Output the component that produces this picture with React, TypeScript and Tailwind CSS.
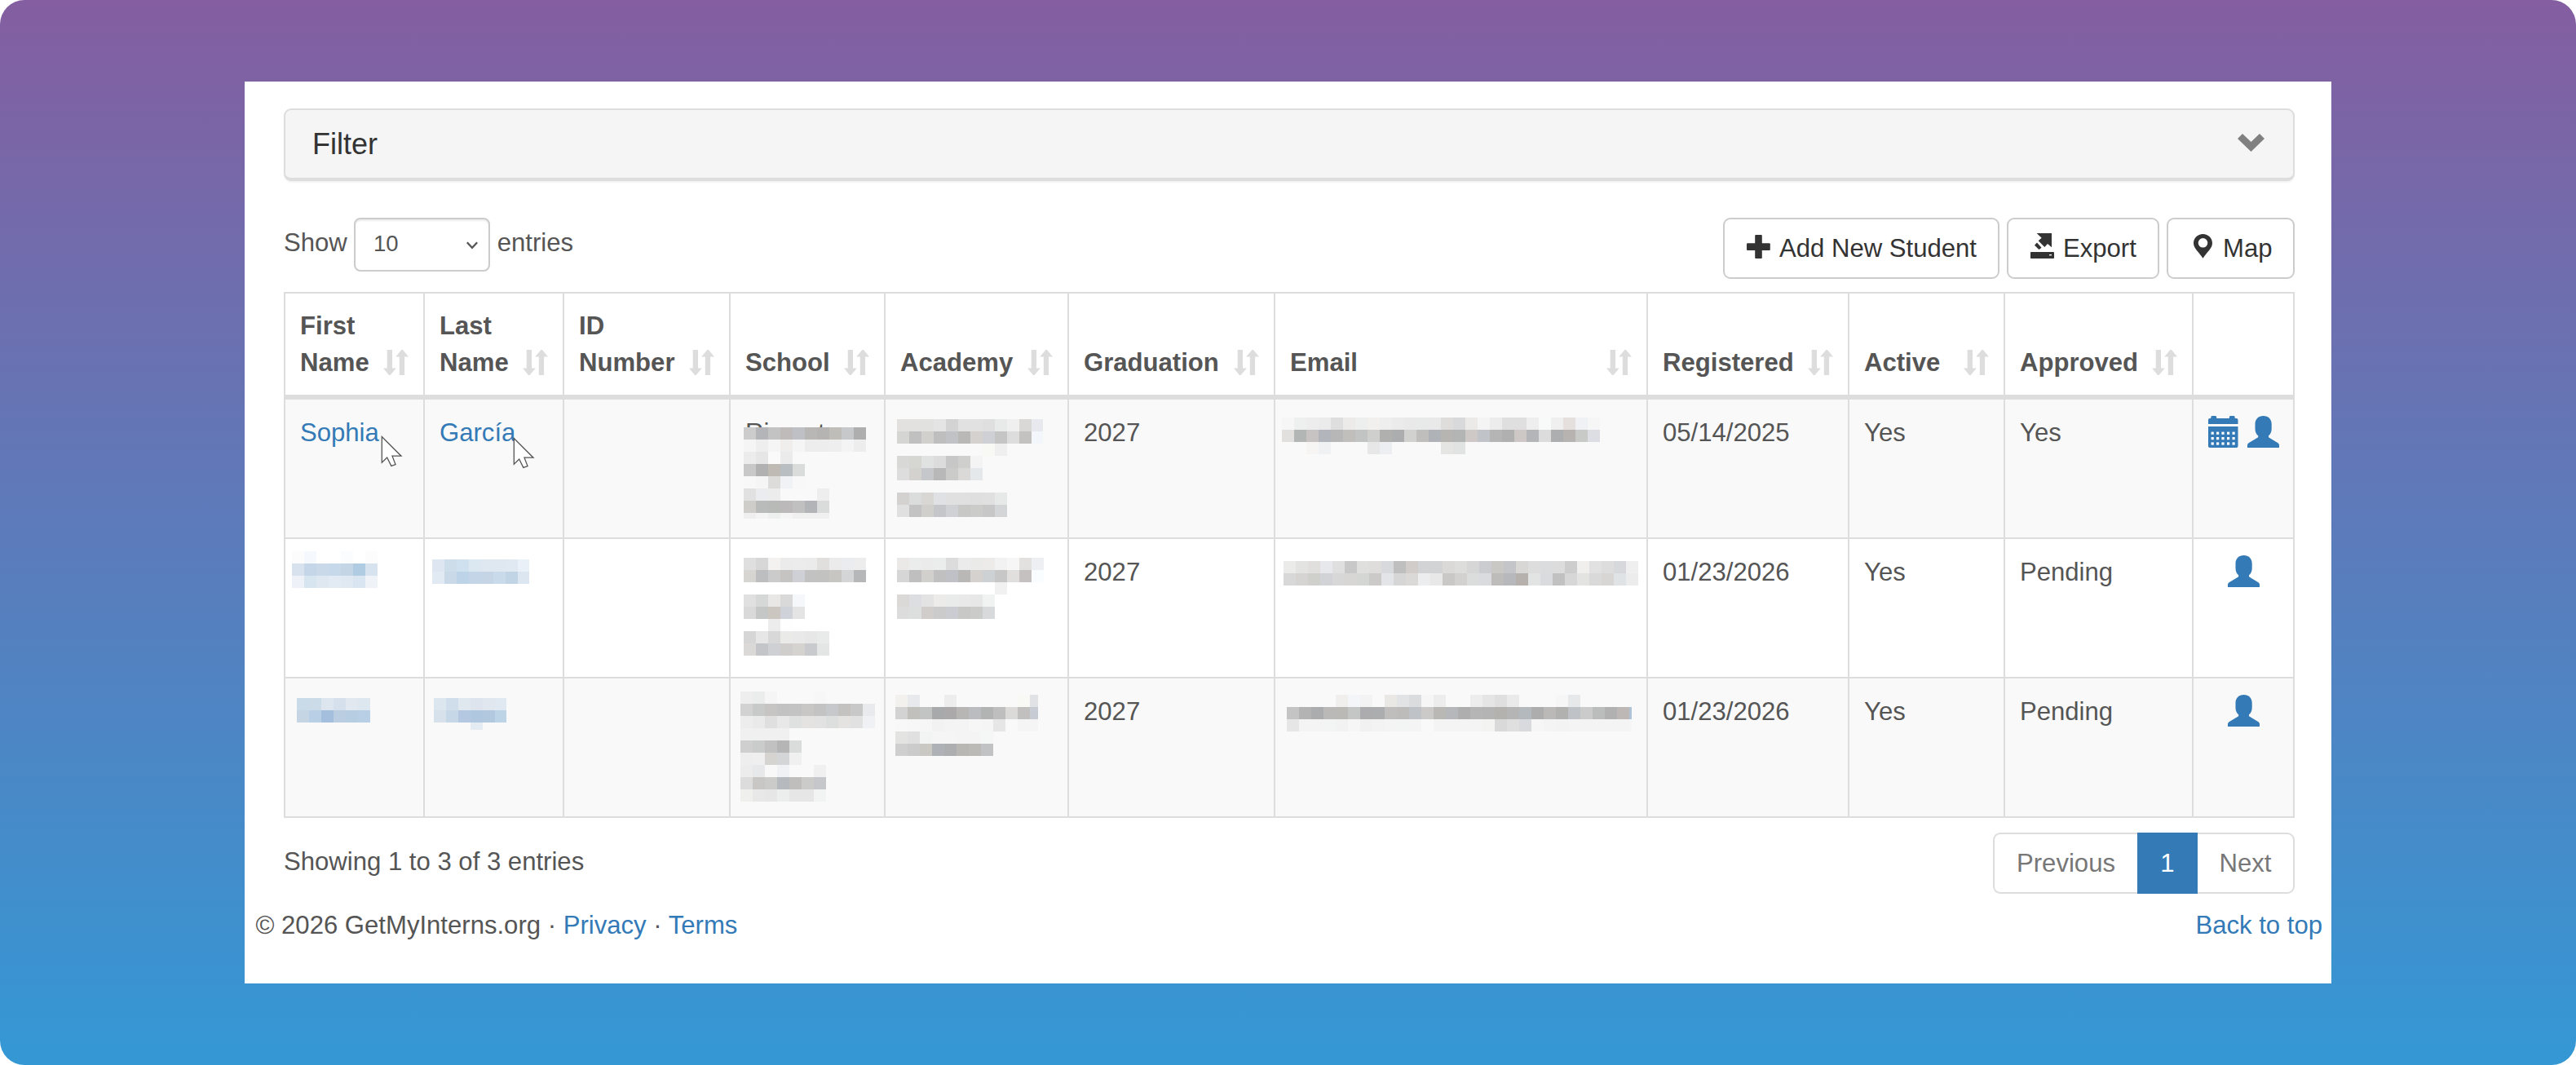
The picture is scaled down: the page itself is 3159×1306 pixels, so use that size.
import { ReactNode } from "react";

type Mosaic = {
  x: number;
  y: number;
  rows: string[];
  width?: number;
  height?: number;
};

type Student = {
  first: ReactNode;
  last: ReactNode;
  school: ReactNode;
  academy: ReactNode;
  graduation: string;
  email: ReactNode;
  registered: string;
  active: string;
  approved: string;
  hasCalendar?: boolean;
};

const BLOCK = 15;

// Each token is one block: "." is empty, "cc" is a grey, "c3d5e6" a full colour
function Redacted({ x, y, rows, width, height }: Mosaic) {
  const lines = rows.map((row) => row.split(" "));
  const w = width ?? Math.max(...lines.map((line) => line.length)) * BLOCK;
  const h = height ?? lines.length * BLOCK;

  return (
    <svg
      className="absolute block"
      style={{ left: x, top: y }}
      width={w}
      height={h}
      shapeRendering="crispEdges"
    >
      {lines.map((line, r) =>
        line.map((token, c) => {
          if (token === "." || token === "") return null;
          const fill = token.length === 2 ? `#${token}${token}${token}` : `#${token}`;
          return (
            <rect key={`${r}-${c}`} x={c * BLOCK} y={r * BLOCK} width={BLOCK} height={BLOCK} fill={fill} />
          );
        })
      )}
    </svg>
  );
}

function CursorIcon({ className }: { className: string }) {
  return (
    <svg className={className} width="28" height="40" viewBox="-1 -1 28 40">
      <path
        d="M.3 .5V32.3L6.7 26L11.8 36.4L17 34.6L13 24.2H24Z"
        fill="#fff"
        stroke="#555"
        strokeWidth="1.3"
      />
    </svg>
  );
}

function SortIcon() {
  return (
    <svg className="absolute right-[18px] bottom-6" width="31" height="31" viewBox="0 0 31 31" fill="#ddd">
      <path d="M4.7 0h6.3v22.5h4.8L8.6 31H7L0 22.5h4.7z" />
      <path d="M19.8 31h6.3V8.5H31L24 0h-1.6L15.2 8.5h4.6z" />
    </svg>
  );
}

function PlusIcon() {
  return (
    <svg className="mr-[9px] -mt-1 shrink-0" width="31" height="29" viewBox="0 0 31 29" fill="#333">
      <rect x="10.2" y="0" width="8.6" height="29" rx="1" />
      <rect x="0" y="10.3" width="28.8" height="8.8" rx="1" />
    </svg>
  );
}

function ExportIcon() {
  return (
    <svg className="mr-[9px] -mt-[6px] shrink-0" width="31" height="31" viewBox="30 33 93 93" fill="#333">
      <path d="M53 33H108V85L93 72L82 84L59 61L71 50Z" />
      <path d="M55 66L72 84L66 90L61 93L45 77Z" />
      <path d="M50 60L75 87" stroke="#fff" strokeWidth="5" />
      <path d="M32 102H115Q117 102 117 104V124Q117 126 115 126H32Q30 126 30 124V104Q30 102 32 102Z" />
      <rect x="99" y="111" width="9" height="4" fill="#fff" />
    </svg>
  );
}

function PinIcon() {
  return (
    <svg className="ml-[4px] mr-[13px] -mt-[6px] shrink-0" width="23" height="30" viewBox="0 0 23 30" fill="#333">
      <path
        fillRule="evenodd"
        d="M11.5 0C5 0 0 5 0 11.2c0 6.500 6.500 10.500 11.500 18.600c5-8.100 11.500-12.100 11.500-18.600C23 5 18 0 11.5 0zM11.500 5a5.800 5.800 0 1 1 0 11.600a5.800 5.800 0 0 1 0-11.600z"
      />
    </svg>
  );
}

function UserIcon() {
  return (
    <svg width="39" height="39" viewBox="0 0 39 39" fill="#337ab7">
      <path d="M19.600 0C13.500 0 9.500 4 9.500 10v6c0 4 1.700 6.800 3.700 8.200v2.100L1.500 33.200Q0 34.200 0 35.800V39H39V35.800Q39 34.200 37.500 33.200L26 26.300V24.200c2-1.400 3.700-4.200 3.700-8.200v-6C29.700 4 25.700 0 19.600 0z" />
    </svg>
  );
}

function CalendarIcon() {
  return (
    <svg width="37" height="39" viewBox="0 0 37 39" fill="#337ab7">
      <path d="M0 10V5Q0 3 2 3H3.300V1.500Q3.300 0 4.800 0H8.700Q10.200 0 10.200 1.500V3H25.800V1.500Q25.800 0 27.300 0H31.200Q32.700 0 32.700 1.500V3H34.500Q36.500 3 36.500 5V10z" />
      <path d="M0 13H36.500V37Q36.500 39 34.500 39H2Q0 39 0 37z" />
      {[19.6, 26, 32.4].map((cy) =>
        [3.6, 10, 16.4, 23, 29.5].map((cx) => (
          <rect key={`${cx}-${cy}`} x={cx} y={cy} width="3.200" height="3.200" fill="#fff" />
        ))
      )}
    </svg>
  );
}

const columns = [
  "First Name",
  "Last Name",
  "ID Number",
  "School",
  "Academy",
  "Graduation",
  "Email",
  "Registered",
  "Active",
  "Approved",
  "",
];

const gridCols = "grid grid-cols-[171px_171px_204px_190px_225px_253px_457px_247px_191px_231px_124px]";

const students: Student[] = [
  {
    first: (
      <>
        <a className="text-[#337ab7]">Sophia</a>
        <CursorIcon className="absolute left-[117px] top-11 z-10" />
      </>
    ),
    last: (
      <>
        <a className="text-[#337ab7]">García</a>
        <CursorIcon className="absolute left-[108px] top-[46px] z-10" />
      </>
    ),
    school: (
      <>
        <span className="inline-block w-[89px]">Ri</span>
        <span>t</span>
        <Redacted
          x={16}
          y={34}
          height={112}
          rows={[
            "cc b4b5b8 c3 bfbbba bfc0c6 b8b7b6 b6b4b2 bfbdb8 c7c8ca ae",
            "f5 ee f5 efeeed f5 ed ed ee f4 ed",
            "ec e6 fa eb",
            "c8 b1 bfbab3 b9bec3 dadcdb",
            "f8 f5 dddcda f0f2f6 f8",
            "e1 ebecef ec . . . ee",
            "cfcdca b9bbba b8bab8 bcb9ba c0 b3b4b7 dadcdb",
            "ef f4 edf0ef f5 f0 f0 f0",
          ]}
        />
      </>
    ),
    academy: (
      <Redacted
        x={14}
        y={24}
        width={179}
        rows={[
          "e2e1e0 e2e1e0 e1e1e0 e3e4e3 d3 e1 e1 df e8eae9 ef d9d8d6 e8e9ee",
          "d5d5d3 c0 d2d0cd be c1c2c6 b9b8b6 d4d1cf cfd0d6 c5 dd c3c2c0 f3f6fa",
          ". . . . . . . f8f8f4 ef",
          "d8d8d6 d6d6d2 e0e2e1 dcdcdd c7 cfcfcd f4",
          "dd d4d2ce c6c7ca b8 cbcbc9 dad9d7 e4e8eb",
          ".",
          "d3d2d0 dadddb d9d7d4 e0e1e4 e0 e0 df e0 e7e9e8",
          "e0 c3 d1cfcc c5c6ca d0d1d4 c8c8c6 cbcbc9 c7 d4d5d7",
        ]}
      />
    ),
    graduation: "2027",
    email: (
      <Redacted
        x={8}
        y={22}
        rows={[
          "f6 eef0ef ed eb de ecebe9 edefee f1f0ef ee eb e9 e8eae9 e9 dedddb d7d9db ebeae8 f4 ec df df ee f7faf8 ef e5e0dd eff1f4 f6",
          "e1e0de b2b6b4 c6c3c2 b2b5bc b7b7b8 c1bfbc c1c4c2 cfcfcd b0b0ae acadaf d1d2d0 c0bebc afb3b7 b6b5b2 b2b5b3 cec9c6 c0c4c8 b5b5b6 b0 cdc8c5 b4b5b8 dc adaeb0 b7b3b0 c8cac8 dddee3",
          ". . f7f5f4 f0f1f3 . . . e7 edeef1 . . . . e5e6e4 e1e3e2",
        ]}
      />
    ),
    registered: "05/14/2025",
    active: "Yes",
    approved: "Yes",
    hasCalendar: true,
  },
  {
    first: (
      <Redacted
        x={8}
        y={15}
        rows={[
          "fc f5f8fc . . fbfcfe . fc",
          "d7e2ee c5d6e8 c9d9e9 c5d9ea c4d5e5 b0cce3 d7e3ef",
          "eef2f8 d7e5f0 dfe8f1 e2eaf3 e0e9f2 d9e5f0 eff3f8",
        ]}
      />
    ),
    last: (
      <Redacted
        x={9}
        y={25}
        width={119}
        rows={[
          "dee7f1 cdddea cfe0ee dbe7f1 dfe8f1 dfe8f1 e0e8f2 e9f0f7",
          "e1eaf3 cad9e8 bdd4e8 c3d5e6 c5d5e6 c9dbea c0d4e5 dbe6f1",
        ]}
      />
    ),
    school: (
      <Redacted
        x={16}
        y={23}
        rows={[
          "df d7 f3f2f1 eb ec eb e0dfdd eb ebecef ed",
          "d6d5d2 bdbec0 cb c6c4c2 cfd0d6 c2 c2c2c0 c7c6c2 d4d5d7 b6b7b9",
          ".",
          "e0 d5d8d6 e9e7e5 d9 f5f7fb",
          "d9 c4c7c5 cbc7c0 cfd3d9 e4",
          ". . ec fe",
          "d6 e6 d8 eaeae8 e9 e7 e9ebea",
          "dad9d7 c4c5c8 cfd0d3 d0cecc d5d3d0 c9cacd e4e6e5",
        ]}
      />
    ),
    academy: (
      <Redacted
        x={14}
        y={23}
        rows={[
          "eae9e8 ebedec eb ebedec dc eb eaeae8 ecebe9 f2 f6 e2e1e0 eeeff2",
          "d6 bf d2d0cd c0 c0c1c6 b9b8b6 d4d1cf ced1d4 c7 e0dfde c4c1c0 f9fdff",
          ". . . . . . . . f1",
          "dad9d7 dcdee1 e3e3e4 ecebe9 e8ebe9 e9 e7 f0f3f2",
          "dc dddfde d1cdca cb cbccd2 c8c8c6 cbcbc9 d8d9db",
        ]}
      />
    ),
    graduation: "2027",
    email: (
      <Redacted
        x={10}
        y={27}
        rows={[
          "ebebe9 e3e3e1 e0dfde e6e8eb df c8 dfdfde dedddc d7d9dc bfbfc0 d1ccc9 d2d3d5 d2d3d5 dad9d7 dddddc d6 cbccd0 cac8c5 c4c5c9 d9d7d5 dd dbdcde dc cd f0efed e1 dd d6d8db ef",
          "d8d8d9 d5d4d2 cfcfcc d2d3d6 d7 d8d6d4 d3d6d3 cbcac8 e2e4e7 d6 dad9d7 ecedef e8 c9c8c6 d3d1cf dadddb dadbde bebcba b7b8bc b6b1ad e1e4e2 dadbde c1 d7 e3e4e2 d9 d8d6d4 dfe3e6 ec",
        ]}
      />
    ),
    registered: "01/23/2026",
    active: "Yes",
    approved: "Pending",
  },
  {
    first: (
      <Redacted
        x={14}
        y={24}
        rows={[
          "c9dbe9 ccdbe8 dde6ee d6e0ec e1e8f0 dde7f0",
          "c5d5e4 b8cfe5 a3bfdd bbcde0 b6cde2 b9cfe5",
        ]}
      />
    ),
    last: (
      <Redacted
        x={11}
        y={24}
        width={89}
        height={39}
        rows={[
          "dce6ee cfdeea dfe7ef dde4ed e1e7ef e0e8f1",
          "d6e1ec c6d7e8 b4c9e1 b0c7e0 b2c8df bdd4e6",
          ". . . e4ebf2",
        ]}
      />
    ),
    school: (
      <Redacted
        x={12}
        y={16}
        rows={[
          "ee ebeded f5 . . . f7",
          "d2 c8cac9 c7c5c3 c2 c3 c8c7c5 c3 c6c8cb c3c2c0 c8 e9eaed",
          "ed ea df e8 dfe1e0 e4e3e1 e2 dcdfdd e4e3e1 e1 f0f1f5",
          "f0 f0 f0 f0",
          "cf cacccb c1 b5 dadcdb",
          "ee ef d5d4d0 d4d5d7 f0",
          "ec e6e8ea f8 f0f1f4 . . f0",
          "dc c8c7c5 cbcbc9 b6babe bfbebc cbcbc9 c6c7ca",
          "efefed e8 e6 ebeeed e6 e6 f1f4f3",
        ]}
      />
    ),
    academy: (
      <Redacted
        x={12}
        y={20}
        width={175}
        rows={[
          "f2f1ee e8e9ec . . ed . . . . . f8f8f4 e1e2e5",
          "d3 c2c0bc c2c4c3 a8a9ab aba9aa b7b6b4 bbbcbf b2b4b3 be dbdad9 c1c0be c7cbd4",
          "f8 f7 f6 f2 f4 f4 f6 f5 e6 . f5 f5",
          "e3e3e1 e0 f1f4f2 f5 f5 f4 f4 f4f7f5",
          "cf cb c9c8c3 aeb2b6 adaeb0 b8b7b4 bbbab7 c1c2c4",
        ]}
      />
    ),
    graduation: "2027",
    email: (
      <Redacted
        x={14}
        y={20}
        width={423}
        rows={[
          ". . . . f0efed f3f5f8 f3 . e9e8e5 e1e3e5 dbdcde f6 ed . . ed e5 df e9eae9 . . . f6 e7e8ea",
          "c4 b3 abacae bab9b7 bab9b5 c3c6c4 acabad acadaf bfbebd bebcbb bfc3c7 cbcac9 b9b8b4 b5b7ba ae b5 b4b4b5 b4b2ae b5 b4b9bd adadae bab9b7 b1b1b0 bfc3c7 cb babdbb b1b1b2 bdb8b5 b0c2d8",
          "e6 f4 f4 f3f5f4 f2 f6 f1 f3 f4 f2f5f4 f4 . f4 f4 f4 f4 f3f3f1 d9 df d9dadd f6 f4 f3 f4 f4 f4 f4 f4 f6",
        ]}
      />
    ),
    registered: "01/23/2026",
    active: "Yes",
    approved: "Pending",
  },
];

function Cell({ children }: { children?: ReactNode }) {
  return (
    <div className="relative border-r-2 border-b-2 border-[#ddd] pl-[18px] pt-[18px]">{children}</div>
  );
}

function StudentTable() {
  return (
    <div className="mt-4 w-[2466px] border-t-2 border-l-2 border-[#ddd]">
      <div className={`${gridCols} h-[130px] font-bold`}>
        {columns.map((label, i) => (
          <div
            key={i}
            className="relative flex items-end border-r-2 border-b-6 border-[#ddd] pl-[18px] pb-[17px]"
          >
            <span className={i < 3 ? "w-[120px]" : ""}>{label}</span>
            {label && <SortIcon />}
          </div>
        ))}
      </div>
      {students.map((s, i) => (
        <div key={i} className={`${gridCols} h-[171px] ${i % 2 === 0 ? "bg-[#f9f9f9]" : "bg-white"}`}>
          <Cell>{s.first}</Cell>
          <Cell>{s.last}</Cell>
          <Cell />
          <Cell>{s.school}</Cell>
          <Cell>{s.academy}</Cell>
          <Cell>{s.graduation}</Cell>
          <Cell>{s.email}</Cell>
          <Cell>{s.registered}</Cell>
          <Cell>{s.active}</Cell>
          <Cell>{s.approved}</Cell>
          <div className="flex items-start justify-center gap-[11px] border-r-2 border-b-2 border-[#ddd] pt-5">
            {s.hasCalendar && <CalendarIcon />}
            <UserIcon />
          </div>
        </div>
      ))}
    </div>
  );
}

function ToolButton({ className, children }: { className: string; children: ReactNode }) {
  return (
    <button
      className={`flex h-[75px] items-center whitespace-nowrap rounded-[9px] border-2 border-[#ccc] bg-white pl-[27px] text-[#333] ${className}`}
    >
      {children}
    </button>
  );
}

export default function App() {
  return (
    <div className="h-[1306px] w-[3159px] bg-white">
      <div className="h-full rounded-[30px] bg-[linear-gradient(to_bottom,#845ea0,#3498d5)] pt-[100px] pl-[300px]">
        <div className="h-[1106px] w-[2559px] bg-white pt-[33px] font-['Liberation_Sans',Arial,sans-serif] text-[31.1px] leading-[45px] text-[#555]">
          <div className="pl-12 pr-[45px]">
            {/* Filter bar */}
            <div className="flex h-[89px] items-center justify-between rounded-[9px] border-2 border-b-4 border-[#ddd] bg-[#f5f5f5] pl-[33px] pr-[35px] shadow-[0_2px_2px_rgba(0,0,0,0.05)]">
              <span className="text-4xl leading-[40px] text-[#333]">Filter</span>
              <svg className="-mt-[3px]" width="33" height="22" viewBox="0 0 33 22" fill="#808080">
                <path d="M0 6L6 0L16.500 10L27 0L33 6L16.500 22Z" />
              </svg>
            </div>

            {/* Page size and actions */}
            <div className="mt-[45px] flex items-start justify-between">
              <div className="flex items-start leading-[61px]">
                <span className="w-[77px] whitespace-nowrap">Show</span>
                <div className="ml-[9px] mr-[8.75px] flex h-[66px] w-[167px] items-center justify-between rounded-[8px] border-2 border-[#ccc] bg-white pb-[2px] pl-[22px] pr-[13px] text-[27.5px] leading-[30px] shadow-[inset_0_2px_2px_rgba(0,0,0,0.075)]">
                  <span>10</span>
                  <svg className="mt-1" width="14" height="10" viewBox="0 0 14 10" fill="none">
                    <path d="M.8 1.200L7 7.800L13.200 1.200" stroke="#555" strokeWidth="2.300" />
                  </svg>
                </div>
                <span>entries</span>
              </div>
              <div className="flex gap-[9px]">
                <ToolButton className="w-[339px]">
                  <PlusIcon />
                  Add New Student
                </ToolButton>
                <ToolButton className="w-[187px]">
                  <ExportIcon />
                  Export
                </ToolButton>
                <ToolButton className="w-[157px]">
                  <PinIcon />
                  Map
                </ToolButton>
              </div>
            </div>

            <StudentTable />

            {/* Table footer */}
            <div className="mt-[18px] flex items-start justify-between">
              <span className="pt-[13px]">Showing 1 to 3 of 3 entries</span>
              <div className="flex h-[75px] text-[#777]">
                <span className="flex w-[177px] items-center justify-center rounded-l-[9px] border-2 border-r-0 border-[#ddd]">
                  Previous
                </span>
                <span className="flex w-[74px] items-center justify-center bg-[#337ab7] text-white">1</span>
                <span className="flex w-[119px] items-center justify-center rounded-r-[9px] border-2 border-l-0 border-[#ddd]">
                  Next
                </span>
              </div>
            </div>
          </div>

          <div className="mt-4 flex justify-between pl-[13.5px] pr-[11px]">
            <span>
              © 2026 GetMyInterns.org · <a className="text-[#337ab7]">Privacy</a> ·{" "}
              <a className="text-[#337ab7]">Terms</a>
            </span>
            <a className="text-[#337ab7]">Back to top</a>
          </div>
        </div>
      </div>
    </div>
  );
}
